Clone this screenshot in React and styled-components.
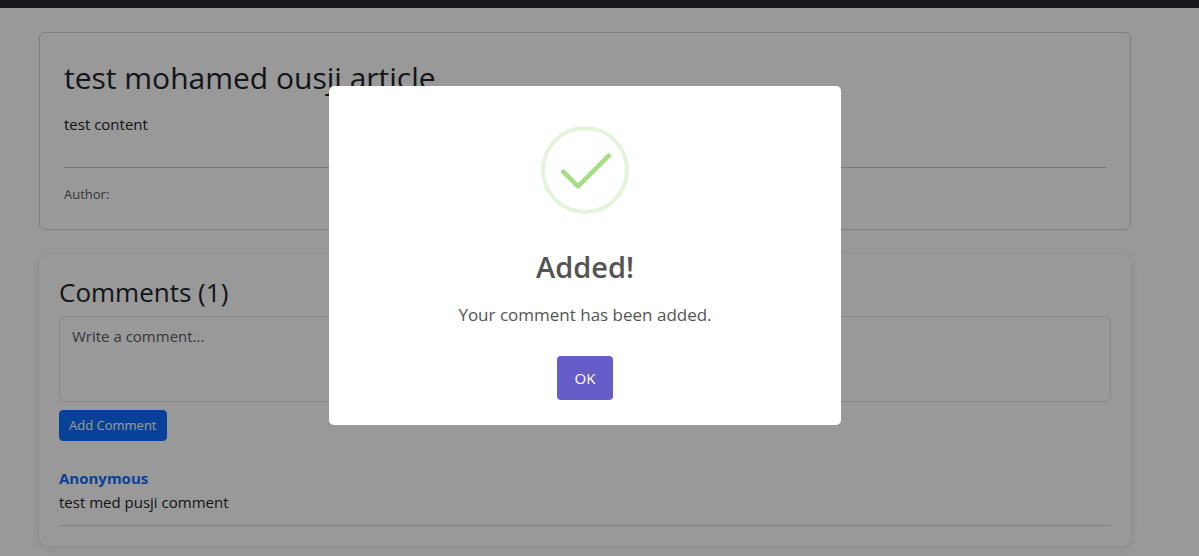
import React from "react";
import styled, { createGlobalStyle } from "styled-components";

const GlobalStyle = createGlobalStyle`
  *, *::before, *::after { box-sizing: border-box; }
  html { overflow: hidden; }
  body {
    margin: 0;
    background: #fff;
    color: #212529;
    font-family: "Segoe UI", "Open Sans", "Noto Sans", sans-serif;
    font-size: 15px;
    line-height: 24px;
  }
  button, textarea { font-family: inherit; }
`;

const Navbar = styled.header`
  height: 8px;
  background: #25262d;
`;

const Page = styled.main`
  padding-right: 29px;
`;

const Container = styled.div`
  max-width: 1140px;
  margin: 0 auto;
  padding: 24px;
  display: flex;
  flex-direction: column;
  gap: 24px;
`;

const ArticleCard = styled.article`
  padding: 24px;
  border: 1px solid #d3d3d4;
  border-radius: 6px;
`;

const ArticleTitle = styled.h1`
  margin: 0 0 13px;
  font-size: 30px;
  font-weight: 400;
  line-height: 42px;
`;

const Paragraph = styled.p`
  margin: 0;
`;

const Divider = styled.hr`
  height: 1px;
  margin: 31px 0 15px;
  border: 0;
  background: #c7c8c9;
`;

const Author = styled.p`
  margin: 0;
  color: #595c5f;
  font-size: 13px;
  line-height: 22px;
`;

const CommentsCard = styled.section`
  padding: 20px;
  border-radius: 10px;
  box-shadow: 0 2px 10px rgba(0, 0, 0, 0.1);
`;

const CommentsTitle = styled.h2`
  margin: 0 0 6px;
  font-size: 26px;
  font-weight: 400;
  line-height: 36px;
`;

const CommentForm = styled.form`
  display: flex;
  flex-direction: column;
  align-items: flex-start;
  gap: 8px;
  margin-bottom: 25px;
`;

const CommentInput = styled.textarea`
  display: block;
  width: 100%;
  height: 86px;
  padding: 7px 12px;
  border: 1px solid #dee2e6;
  border-radius: 6px;
  background: #fff;
  color: #212529;
  font-size: 15px;
  line-height: 24px;
  resize: none;
  &::placeholder { color: #595c5f; opacity: 1; }
`;

const AddButton = styled.button`
  padding: 5px 9px;
  border: 1px solid #0d6efd;
  border-radius: 4px;
  background: #0d6efd;
  color: #fff;
  font-size: 13px;
  line-height: 19px;
`;

const Comment = styled.div`
  padding-bottom: 11px;
  border-bottom: 1px solid #ddd;
`;

const CommentAuthor = styled.strong`
  display: block;
  color: #0d6efd;
  font-weight: 700;
`;

const Overlay = styled.div`
  position: fixed;
  inset: 0;
  display: flex;
  justify-content: center;
  align-items: flex-start;
  padding: 86px 29px 10px 0;
  background: rgba(0, 0, 0, 0.4);
`;

const Dialog = styled.div`
  width: 512px;
  max-width: 100%;
  padding: 40px 24px 25px;
  display: flex;
  flex-direction: column;
  align-items: center;
  border-radius: 5px;
  background: #fff;
  color: #545454;
  text-align: center;
`;

const SuccessIcon = styled.svg`
  width: 88px;
  height: 88px;
`;

const DialogTitle = styled.h2`
  margin: 33px 0 14px;
  font-size: 29px;
  font-weight: 600;
  line-height: 40px;
`;

const DialogText = styled.p`
  margin: 0 0 27px;
  font-size: 17px;
  line-height: 28px;
`;

const ConfirmButton = styled.button`
  padding: 10px 18px;
  border: 0;
  border-radius: 4px;
  background: #665cc7;
  color: #fff;
  font-size: 15px;
  line-height: 24px;
`;

export default function App() {
  return (
    <>
      <GlobalStyle />
      <Navbar />
      <Page>
        <Container>
          <ArticleCard>
            <ArticleTitle>test mohamed ousji article</ArticleTitle>
            <Paragraph>test content</Paragraph>
            <Divider />
            <Author>Author:</Author>
          </ArticleCard>
          <CommentsCard>
            <CommentsTitle>Comments (1)</CommentsTitle>
            <CommentForm>
              <CommentInput aria-label="Write a comment" placeholder="Write a comment..." />
              <AddButton type="button">Add Comment</AddButton>
            </CommentForm>
            <Comment>
              <CommentAuthor>Anonymous</CommentAuthor>
              <Paragraph>test med pusji comment</Paragraph>
            </Comment>
          </CommentsCard>
        </Container>
      </Page>
      <Overlay>
        <Dialog role="dialog" aria-modal="true" aria-labelledby="dialog-title">
          <SuccessIcon viewBox="0 0 88 88" fill="none" aria-hidden="true">
            <circle cx="44" cy="44" r="42" stroke="#e4f4db" strokeWidth="4" />
            <path
              d="M22.2 45.2 37 60 67.8 29.2"
              transform="translate(0 0.4)"
              stroke="#a5dc86"
              strokeWidth="4.6"
              strokeLinecap="round"
              strokeLinejoin="round"
            />
          </SuccessIcon>
          <DialogTitle id="dialog-title">Added!</DialogTitle>
          <DialogText>Your comment has been added.</DialogText>
          <ConfirmButton type="button">OK</ConfirmButton>
        </Dialog>
      </Overlay>
    </>
  );
}
